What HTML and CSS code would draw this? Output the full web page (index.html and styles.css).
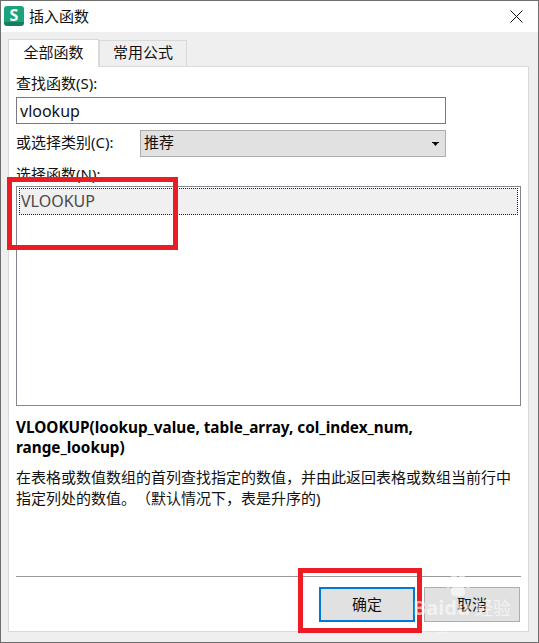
FILE: index.html
```html
<!DOCTYPE html>
<html lang="zh-CN">
<head>
    <meta charset="UTF-8">
    <meta name="viewport" content="width=device-width, initial-scale=1.0">
    <title>插入函数</title>
    <link rel="stylesheet" href="styles.css">
</head>
<body>

<div class="dialog">
    <div class="titlebar">
        <div class="app-icon">S</div>
        <div class="title">插入函数</div>
        <svg class="close" width="13" height="13" viewBox="0 0 13 13">
            <path d="M0.5 0.5L12.5 12.5M12.5 0.5L0.5 12.5" stroke="#111" stroke-width="1" fill="none"/>
        </svg>
    </div>

    <div class="body">
        <div class="tabs">
            <div class="tab active">全部函数</div>
            <div class="tab">常用公式</div>
        </div>

        <div class="panel">
            <div class="label">查找函数(S):</div>
            <div class="search">vlookup</div>

            <div class="category">
                <div class="label">或选择类别(C):</div>
                <div class="select">
                    <span>推荐</span>
                    <svg width="7" height="4" viewBox="0 0 7 4"><path d="M0 0H7V1H6L3.5 4L1 1H0Z" fill="#000"/></svg>
                </div>
            </div>

            <div class="label list-label">选择函数(N):</div>
            <div class="list">
                <div class="list-row">VLOOKUP</div>
            </div>

            <div class="signature">VLOOKUP(lookup_value, table_array, col_index_num, range_lookup)</div>
            <div class="desc">在表格或数值数组的首列查找指定的数值，并由此返回表格或数组当前行中指定列处的数值。（默认情况下，表是升序的)</div>

            <div class="footer">
                <div class="btn primary">确定</div>
                <div class="btn">取消</div>
            </div>
        </div>
    </div>

    <div class="mark mark-list"></div>
    <div class="mark mark-ok"></div>

    <div class="watermark">
        <svg class="paw" width="26" height="24" viewBox="0 0 26 24">
            <ellipse cx="3" cy="11" rx="3" ry="4"/>
            <ellipse cx="9" cy="4" rx="3" ry="4"/>
            <ellipse cx="17" cy="4" rx="3" ry="4"/>
            <ellipse cx="23" cy="11" rx="3" ry="4"/>
            <path d="M13 10c4 0 7 5 7 9 0 4-3 5-7 4-4 1-7 0-7-4 0-4 3-9 7-9z"/>
        </svg>
        <span class="wm-bai">Baidu</span>
        <span class="wm-jy">经验</span>
        <span class="wm-url">jingyan.baidu.com</span>
    </div>
</div>

</body>
</html>
```

FILE: styles.css
```css
* {
    box-sizing: border-box;
}
body {
    margin: 0;
    width: 539px;
    height: 643px;
    overflow: hidden;
    background: #fff;
    font-family: "Noto Sans", "Noto Sans CJK SC", sans-serif;
    font-size: 15px;
    color: #111;
}
.dialog {
    position: relative;
    width: 539px;
    height: 643px;
    border: 1px solid #6e6e6e;
    display: flex;
    flex-direction: column;
}
.titlebar {
    height: 31px;
    flex: none;
    background: #fff;
    display: flex;
    align-items: center;
    padding: 0 15px 1px 3px;
}
.app-icon {
    width: 20px;
    height: 20px;
    border-radius: 3px;
    background: linear-gradient(#1ba37a 78%, #0f7f5c 78%);
    color: #fff;
    font-weight: 700;
    font-size: 16px;
    line-height: 19px;
    text-align: center;
}
.title {
    margin-left: 5px;
    flex: 1;
    line-height: 20px;
}
.body {
    flex: 1;
    background: #efefef;
    padding: 7px 9px 10px 7px;
    display: flex;
    flex-direction: column;
}
.tabs {
    display: flex;
    height: 28px;
    flex: none;
    align-items: flex-end;
    margin-bottom: -1px;
    position: relative;
}
.tab {
    width: 88px;
    height: 27px;
    border: 1px solid #d9d9d9;
    text-align: center;
    line-height: 23px;
}
.tab.active {
    width: 91px;
    height: 28px;
    background: #fff;
    border-bottom: none;
    line-height: 25px;
}
.panel {
    flex: 1;
    background: #fff;
    border: 1px solid #d9d9d9;
    padding: 5px 7px 9px 7px;
    display: flex;
    flex-direction: column;
}
.label {
    line-height: 22px;
    height: 22px;
}
.search {
    width: 430px;
    height: 27px;
    margin-top: 3px;
    border: 1px solid #7a7a7a;
    padding-left: 3px;
    line-height: 27px;
    font-size: 16px;
}
.category {
    display: flex;
    align-items: center;
    margin-top: 6px;
    width: 430px;
    justify-content: space-between;
}
.category .label {
    margin-bottom: 4px;
}
.select {
    width: 306px;
    height: 27px;
    background: #e1e1e1;
    border: 1px solid #adadad;
    padding: 0 6px 0 3px;
    display: flex;
    align-items: center;
    justify-content: space-between;
}
.select span {
    line-height: 22px;
    margin-bottom: 3px;
}
.list-label {
    margin-top: 6px;
}
.list {
    width: 505px;
    height: 220px;
    margin-top: 1px;
    border: 1px solid #828790;
    padding: 1px 2px;
}
.list-row {
    height: 27px;
    background: #f0f0f0;
    border: 1px dotted #222;
    padding-left: 1px;
    line-height: 24px;
    color: #4a4a4a;
    font-size: 16px;
}
.signature {
    margin-top: 11px;
    font-weight: 700;
    font-size: 15.3px;
    line-height: 20px;
    width: 440px;
    color: #000;
}
.desc {
    margin-top: 10px;
    line-height: 21px;
    width: 505px;
    text-spacing-trim: space-all;
}
.footer {
    margin-top: auto;
    width: 505px;
    border-top: 1px solid #999;
    padding: 10px 1px 0 0;
    display: flex;
    justify-content: flex-end;
    gap: 9px;
}
.btn {
    width: 96px;
    height: 35px;
    background: #e1e1e1;
    border: 1px solid #adadad;
    text-align: center;
    line-height: 33px;
}
.btn.primary {
    border: 2px solid #0078d7;
    line-height: 31px;
}
.mark {
    position: absolute;
    border: 5px solid #ed1c24;
}
.mark-list {
    left: 6px;
    top: 176px;
    width: 171px;
    height: 73px;
}
.mark-ok {
    left: 297px;
    top: 567px;
    width: 124px;
    height: 65px;
}
.watermark {
    position: absolute;
    left: 0;
    top: 0;
    color: rgba(255, 255, 255, 0.6);
    pointer-events: none;
}
.paw {
    position: absolute;
    left: 444px;
    top: 572px;
    fill: rgba(255, 255, 255, 0.6);
}
.wm-bai {
    position: absolute;
    left: 412px;
    top: 595px;
    font-size: 20px;
    font-weight: 700;
    line-height: 24px;
}
.wm-jy {
    position: absolute;
    left: 474px;
    top: 596px;
    font-size: 18px;
    line-height: 22px;
    white-space: nowrap;
}
.wm-url {
    position: absolute;
    left: 422px;
    top: 619px;
    font-size: 11px;
    line-height: 12px;
    white-space: nowrap;
    letter-spacing: 0.4px;
}
```
